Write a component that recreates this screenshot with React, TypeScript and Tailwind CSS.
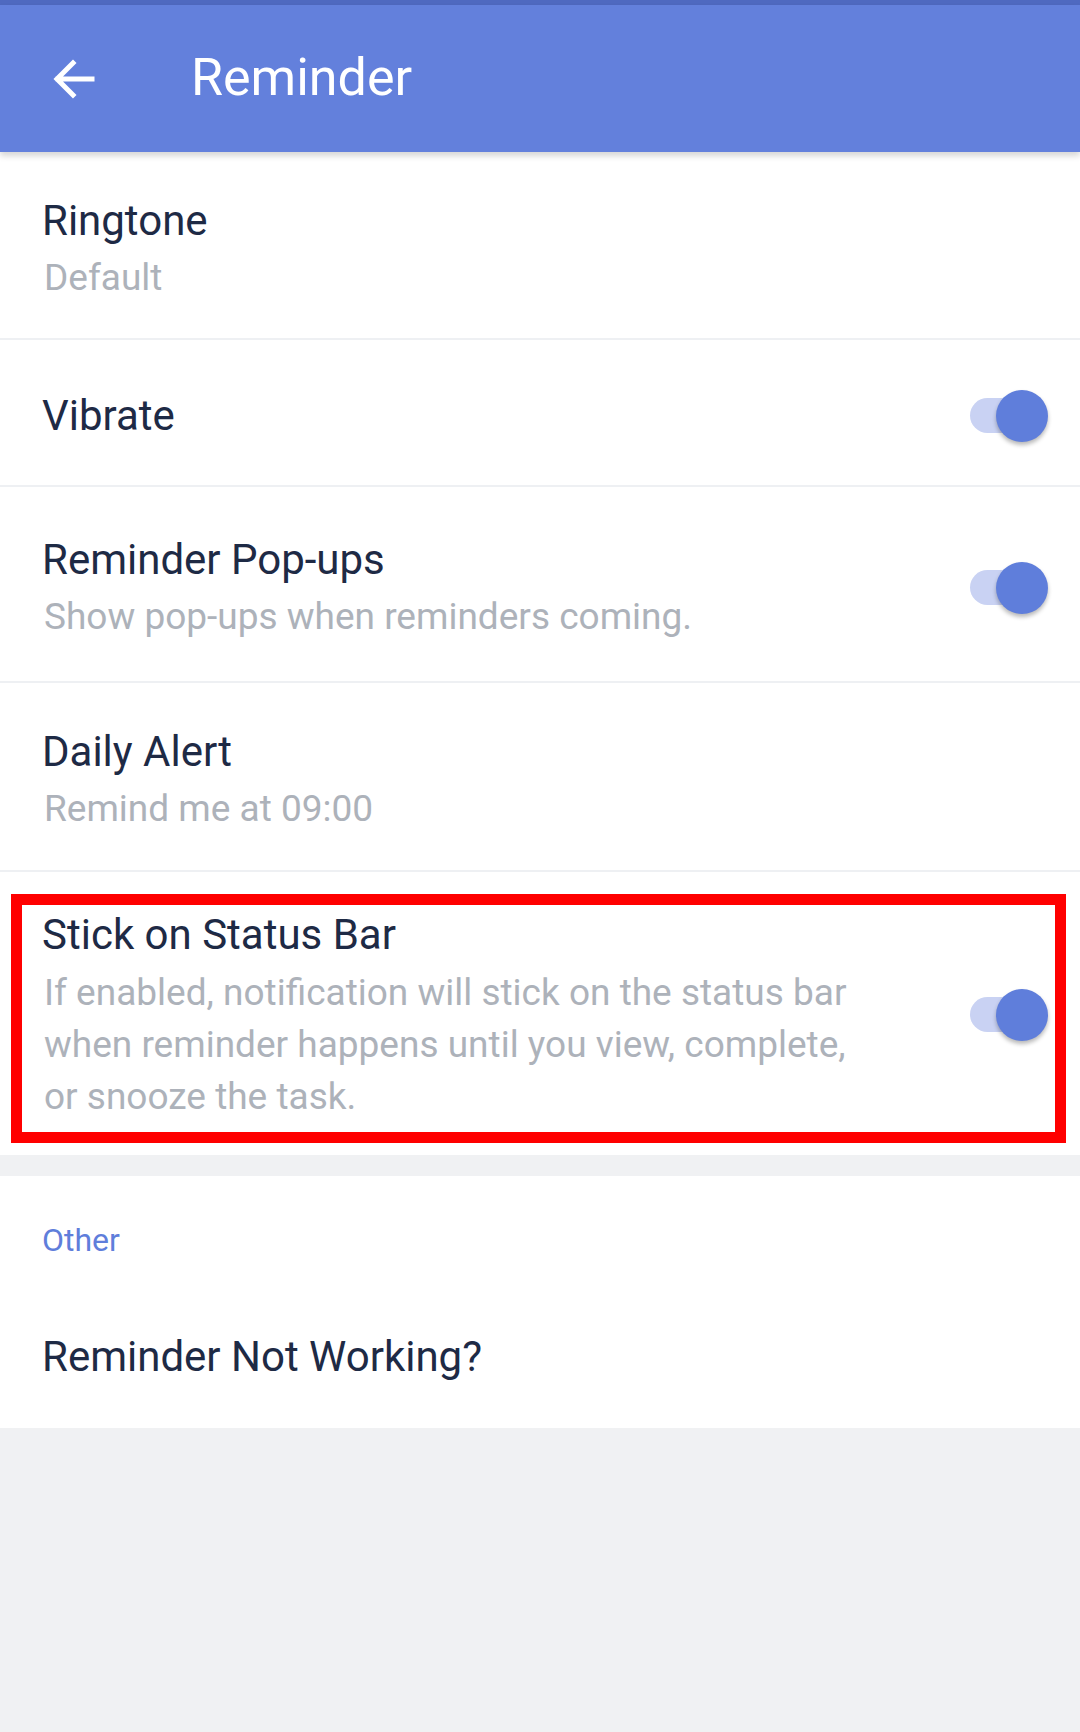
import React from "react";

function Toggle() {
  return (
    <div className="relative w-[84px] h-[54px] shrink-0">
      <div className="absolute left-[2px] top-[9px] w-[70px] h-[35px] rounded-full bg-[#c9d2f3]" />
      <div className="absolute right-[4px] top-[1px] w-[52px] h-[52px] rounded-full bg-[#5f7edb] shadow-[0_3px_4px_rgba(0,0,0,0.28)]" />
    </div>
  );
}

const title = "text-[42px] leading-[56px] text-[#1e2a45]";
const sub = "text-[37px] leading-[52px] text-[#adb2ba] mt-[3px] pl-[2px]";

export default function App() {
  return (
    <div
      className="w-[1080px] h-[1732px] bg-[#f0f1f3] overflow-hidden"
      style={{ fontFamily: "Roboto, 'Noto Sans', sans-serif" }}
    >
      <div className="h-[5px] bg-[#4f69c0]" />
      <div className="relative z-10 h-[147px] bg-[#6380dc] flex items-center shadow-[0_4px_6px_rgba(0,0,0,0.16)]">
        <div className="w-[191px] pl-[52px] flex items-center">
          <svg width="44" height="40" viewBox="0 0 44 40" fill="none">
            <path d="M40 20H6M21 4L5 20l16 16" stroke="white" strokeWidth="5" strokeLinecap="square" />
          </svg>
        </div>
        <div className="text-[52px] leading-none text-white pb-[2px]">Reminder</div>
      </div>

      <div className="bg-white">
        <div className="px-[42px] pt-[41px] pb-[34px] border-b-2 border-[#eef0f3]">
          <div className={title}>Ringtone</div>
          <div className={sub}>Default</div>
        </div>

        <div className="pl-[42px] pr-[28px] h-[147px] pt-[6px] flex items-center justify-between border-b-2 border-[#eef0f3]">
          <div className={title}>Vibrate</div>
          <Toggle />
        </div>

        <div className="pl-[42px] pr-[28px] pt-[45px] pb-[38px] flex items-center justify-between border-b-2 border-[#eef0f3]">
          <div>
            <div className={title}>Reminder Pop-ups</div>
            <div className={sub}>Show pop-ups when reminders coming.</div>
          </div>
          <Toggle />
        </div>

        <div className="px-[42px] pt-[41px] pb-[35px] border-b-2 border-[#eef0f3]">
          <div className={title}>Daily Alert</div>
          <div className={sub}>Remind me at 09:00</div>
        </div>

        <div className="relative pl-[42px] pr-[28px] pt-[35px] pb-[32px] flex items-center justify-between">
          <div>
            <div className={title}>Stick on Status Bar</div>
            <div className="text-[37px] leading-[52px] text-[#adb2ba] mt-[4px] pl-[2px]">
              If enabled, notification will stick on the status bar
              <br />
              when reminder happens until you view, complete,
              <br />
              or snooze the task.
            </div>
          </div>
          <Toggle />
          <div className="absolute left-[11px] right-[14px] top-[22px] bottom-[12px] border-[11px] border-[#ff0000] pointer-events-none" />
        </div>
      </div>

      <div className="h-[21px]" />

      <div className="bg-white h-[252px] px-[42px] flex flex-col">
        <div className="mt-[43px] text-[32px] leading-[42px] text-[#5f7edb]">Other</div>
        <div className="mt-[68px] text-[42px] leading-[56px] text-[#1e2a45]">Reminder Not Working?</div>
      </div>
    </div>
  );
}
